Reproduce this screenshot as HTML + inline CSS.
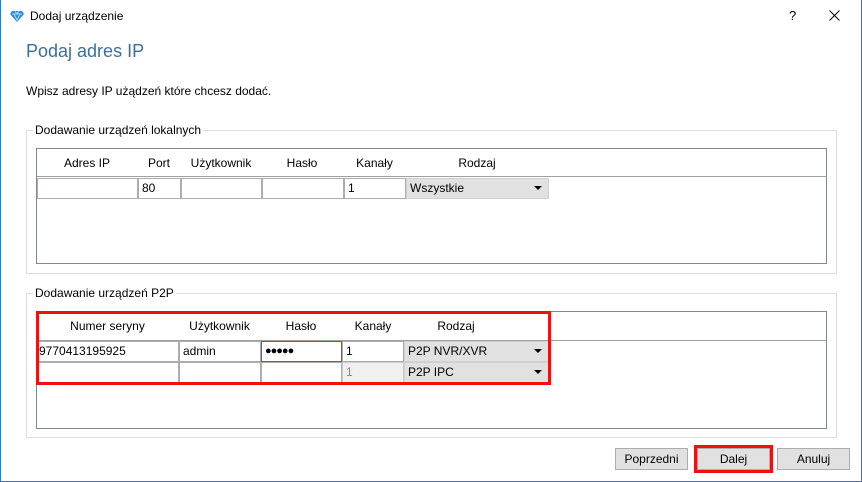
<!DOCTYPE html>
<html><head><meta charset="utf-8"><style>
*{margin:0;padding:0;box-sizing:border-box}
body{width:862px;height:482px;background:#fff;font-family:"Liberation Sans",Arial,sans-serif;font-size:12px;color:#000;position:relative;overflow:hidden}
.a{position:absolute}
.win{left:0;top:0;width:862px;height:482px;border:1px solid #2b78d8;border-top:none}
.grp{border:1px solid #dcdcdc}
.lbl{background:#fff;padding:0 2px;line-height:14px}
.tbl{border:1px solid #828790;background:#fff}
.c{position:absolute;border:1px solid #abadb3;background:#fff;padding-left:3px;line-height:18px;font-size:12px;overflow:hidden}
.cb{position:absolute;background:#e1e1e1;border:1px solid #d0d0d0;padding-left:3px;line-height:18px}
.cb:after{content:"";position:absolute;right:6px;top:7px;border-left:4px solid transparent;border-right:4px solid transparent;border-top:4px solid #000}
.h{position:absolute;text-align:center;line-height:14px}
.btn{position:absolute;background:#e1e1e1;border:1px solid #adadad;text-align:center;line-height:20px}
</style></head><body>
<div class="a win"></div>
<svg class="a" style="left:10px;top:10px" width="14" height="12" viewBox="0 0 14 12"><path d="M2 1h10l2 3-7 8-7-8z" fill="#2a8ad8"/><path d="M2 4h10M5 1l2 3 2-3M4 4l3 6 3-6" stroke="#a8dcff" stroke-width="1" fill="none"/></svg>
<div class="a" style="left:30px;top:9px;line-height:14px">Dodaj urządzenie</div>
<div class="a" style="left:789px;top:8px;font-size:13px">?</div>
<svg class="a" style="left:829px;top:10px" width="11" height="11"><path d="M0.5 0.5l10 10M10.5 0.5l-10 10" stroke="#000" stroke-width="1"/></svg>
<div class="a" style="left:26px;top:40px;font-size:18px;color:#3c6e9a;line-height:22px">Podaj adres IP</div>
<div class="a" style="left:26px;top:84px;line-height:14px">Wpisz adresy IP użądzeń które chcesz dodać.</div>

<div class="a grp" style="left:26px;top:130px;width:811px;height:144px"></div>
<div class="a lbl" style="left:33px;top:123px">Dodawanie urządzeń lokalnych</div>
<div class="a tbl" style="left:36px;top:148px;width:791px;height:116px"></div>
<div class="a" style="left:37px;top:176px;width:789px;height:1px;background:#a0a0a0"></div>
<div class="h" style="left:37px;top:156px;width:100px">Adres IP</div>
<div class="h" style="left:138px;top:156px;width:42px">Port</div>
<div class="h" style="left:181px;top:156px;width:80px">Użytkownik</div>
<div class="h" style="left:262px;top:156px;width:80px">Hasło</div>
<div class="h" style="left:344px;top:156px;width:61px">Kanały</div>
<div class="h" style="left:406px;top:156px;width:142px">Rodzaj</div>
<div class="c" style="left:37px;top:178px;width:101px;height:21px"></div>
<div class="c" style="left:138px;top:178px;width:43px;height:21px">80</div>
<div class="c" style="left:181px;top:178px;width:81px;height:21px"></div>
<div class="c" style="left:262px;top:178px;width:82px;height:21px"></div>
<div class="c" style="left:344px;top:178px;width:62px;height:21px">1</div>
<div class="cb" style="left:406px;top:178px;width:143px;height:21px">Wszystkie</div>

<div class="a grp" style="left:26px;top:293px;width:811px;height:145px"></div>
<div class="a lbl" style="left:33px;top:286px">Dodawanie urządzeń P2P</div>
<div class="a tbl" style="left:36px;top:311px;width:791px;height:118px"></div>
<div class="a" style="left:37px;top:340px;width:789px;height:1px;background:#a0a0a0"></div>
<div class="h" style="left:37px;top:319px;width:141px">Numer seryny</div>
<div class="h" style="left:179px;top:319px;width:81px">Użytkownik</div>
<div class="h" style="left:261px;top:319px;width:80px">Hasło</div>
<div class="h" style="left:342px;top:319px;width:62px">Kanały</div>
<div class="h" style="left:404px;top:319px;width:104px">Rodzaj</div>
<div class="c" style="left:37px;top:341px;width:142px;height:21px;padding-left:1px">9770413195925</div>
<div class="c" style="left:179px;top:341px;width:82px;height:21px">admin</div>
<div class="c" style="left:261px;top:341px;width:81px;height:21px;border-color:#1979ca;font-size:11px;letter-spacing:-1px">●●●●●</div>
<div class="c" style="left:342px;top:341px;width:62px;height:21px">1</div>
<div class="cb" style="left:404px;top:341px;width:145px;height:21px">P2P NVR/XVR</div>
<div class="c" style="left:37px;top:362px;width:142px;height:21px"></div>
<div class="c" style="left:179px;top:362px;width:82px;height:21px"></div>
<div class="c" style="left:261px;top:362px;width:81px;height:21px"></div>
<div class="c" style="left:342px;top:362px;width:62px;height:21px;background:#f0f0f0;color:#888;border-color:#ccc">1</div>
<div class="cb" style="left:404px;top:362px;width:145px;height:21px">P2P IPC</div>
<div class="a" style="left:36px;top:311px;width:515px;height:74px;border:3px solid #ee1111"></div>

<div class="btn" style="left:615px;top:448px;width:73px;height:22px">Poprzedni</div>
<div class="btn" style="left:697px;top:448px;width:73px;height:22px">Dalej</div>
<div class="a" style="left:694px;top:445px;width:79px;height:28px;border:3px solid #ee1111"></div>
<div class="btn" style="left:777px;top:448px;width:73px;height:22px">Anuluj</div>
</body></html>
